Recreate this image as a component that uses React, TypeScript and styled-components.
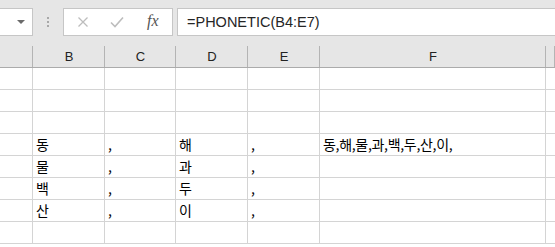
import React from 'react';
import styled, { createGlobalStyle } from 'styled-components';

const GlobalStyle = createGlobalStyle`
  html, body {
    margin: 0;
    padding: 0;
    background: #ffffff;
    overflow: hidden;
  }
`;

const Sheet = styled.div`
  width: 555px;
  height: 247px;
  overflow: hidden;
  background: #ffffff;
  font-family: 'Liberation Sans', Arial, sans-serif;
`;

const Toolbar = styled.div`
  height: 36px;
  background: #e6e6e6;
  display: flex;
  align-items: flex-start;
  padding-top: 8px;
  box-sizing: border-box;
`;

const NameBox = styled.div`
  width: 33px;
  height: 28px;
  box-sizing: border-box;
  background: #ffffff;
  border: 1px solid #c6c6c6;
  border-left: none;
  display: flex;
  align-items: center;
  justify-content: flex-end;
  padding-right: 7px;
`;

const Caret = styled.div`
  width: 0;
  height: 0;
  border-left: 4px solid transparent;
  border-right: 4px solid transparent;
  border-top: 4px solid #6a6a6a;
`;

const Grip = styled.div`
  width: 30px;
  height: 28px;
  display: flex;
  flex-direction: column;
  align-items: center;
  justify-content: center;
  gap: 2px;
`;

const GripDot = styled.span`
  width: 2px;
  height: 2px;
  background: #a8a8a8;
`;

const FxBox = styled.div`
  width: 110px;
  height: 28px;
  box-sizing: border-box;
  background: #ffffff;
  border: 1px solid #c6c6c6;
  display: flex;
  align-items: center;
  padding-left: 13px;
  gap: 21px;
`;

const FxMark = styled.span`
  font-family: 'Liberation Serif', 'Times New Roman', serif;
  font-style: italic;
  font-size: 16px;
  color: #555555;
  margin-left: 2px;
  padding-bottom: 2px;
`;

const FormulaInput = styled.div`
  flex: 1;
  height: 28px;
  margin-left: 4px;
  box-sizing: border-box;
  background: #ffffff;
  border: 1px solid #c6c6c6;
  border-right: none;
  display: flex;
  align-items: center;
  padding-left: 9px;
  font-size: 14.5px;
  color: #262626;
`;

const Grid = styled.div`
  display: grid;
  grid-template-columns: 33px 72px 71px 72px 72px 226px 1fr;
`;

const HeaderCell = styled.div`
  height: 32px;
  box-sizing: border-box;
  background: #e6e6e6;
  border-bottom: 1px solid #ababab;
  display: flex;
  align-items: center;
  justify-content: center;
  padding-top: 9px;
  font-size: 13px;
  color: #222222;
  position: relative;

  &::after {
    content: '';
    position: absolute;
    right: 0;
    top: 10px;
    bottom: 0;
    width: 1px;
    background: #b4b4b4;
  }
`;

const Cell = styled.div<{ $last?: boolean }>`
  height: 22px;
  box-sizing: border-box;
  border-right: ${(p) => (p.$last ? 'none' : '1px solid #d4d4d4')};
  border-bottom: 1px solid #d4d4d4;
  display: flex;
  align-items: flex-end;
  padding: 0 0 2px 3px;
  font-family: 'Noto Sans CJK KR', 'Liberation Sans', sans-serif;
  font-size: 14px;
  line-height: 18px;
  letter-spacing: -0.3px;
  color: #000000;
  white-space: nowrap;
  overflow: visible;
`;

const XIcon = () => (
  <svg width="12" height="12" viewBox="0 0 12 12">
    <path d="M1.5 1.5 L10.5 10.5 M10.5 1.5 L1.5 10.5" stroke="#bdbdbd" strokeWidth="1.3" fill="none" />
  </svg>
);

const CheckIcon = () => (
  <svg width="14" height="12" viewBox="0 0 14 12">
    <path d="M1 6.5 L5 10.5 L13 1.5" stroke="#bdbdbd" strokeWidth="1.6" fill="none" />
  </svg>
);

const columns = ['', 'B', 'C', 'D', 'E', 'F', ''];

const rows: string[][] = [
  ['', '', '', '', '', '', ''],
  ['', '', '', '', '', '', ''],
  ['', '', '', '', '', '', ''],
  ['', '동', ',', '해', ',', '동,해,물,과,백,두,산,이,', ''],
  ['', '물', ',', '과', ',', '', ''],
  ['', '백', ',', '두', ',', '', ''],
  ['', '산', ',', '이', ',', '', ''],
  ['', '', '', '', '', '', ''],
];

const App = () => {
  return (
    <Sheet>
      <GlobalStyle />
      <Toolbar>
        <NameBox>
          <Caret />
        </NameBox>
        <Grip>
          <GripDot />
          <GripDot />
          <GripDot />
        </Grip>
        <FxBox>
          <XIcon />
          <CheckIcon />
          <FxMark>fx</FxMark>
        </FxBox>
        <FormulaInput>=PHONETIC(B4:E7)</FormulaInput>
      </Toolbar>
      <Grid>
        {columns.map((c, i) => (
          <HeaderCell key={i}>{c}</HeaderCell>
        ))}
        {rows.map((row, r) =>
          row.map((v, c) => (
            <Cell key={`${r}-${c}`} $last={c === row.length - 1}>
              {v}
            </Cell>
          ))
        )}
      </Grid>
    </Sheet>
  );
};

export default App;
